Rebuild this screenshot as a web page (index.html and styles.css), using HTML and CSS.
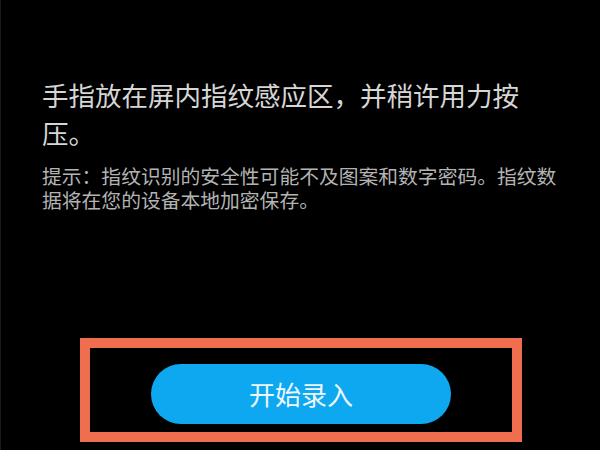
FILE: index.html
```html
<!DOCTYPE html>
<html lang="zh-CN">
<head>
<meta charset="utf-8">
<title>指纹录入</title>
<link rel="stylesheet" href="styles.css">
</head>
<body>
<div class="screen">
  <div class="content">
    <p class="title">手指放在屏内指纹感应区，并稍许用力按压。</p>
    <p class="hint">提示：指纹识别的安全性可能不及图案和数字密码。指纹数据将在您的设备本地加密保存。</p>
  </div>
  <div class="highlight">
    <button class="start-btn" type="button">开始录入</button>
  </div>
</div>
</body>
</html>
```

FILE: styles.css
```css
html, body {
  margin: 0;
  padding: 0;
  background: #000;
}

.screen {
  width: 600px;
  height: 450px;
  box-sizing: border-box;
  border-left: 1px solid #1c1c1c;
  background: #000;
  display: flex;
  flex-direction: column;
  overflow: hidden;
  font-family: "Noto Sans CJK SC", "Noto Sans", sans-serif;
}

.content {
  padding: 76px 0 0 41px;
  width: 525px;
}

.title {
  margin: 0;
  font-size: 26.5px;
  line-height: 37.5px;
  color: #d6d6d6;
}

.hint {
  margin: 13px 0 0 0;
  font-size: 19.8px;
  line-height: 24px;
  color: #b3b3b3;
}

.highlight {
  margin: 126px 0 0 79px;
  width: 442px;
  height: 104px;
  box-sizing: border-box;
  border: 10px solid #ef6e4f;
  padding: 16px 0 0 0;
  display: flex;
  justify-content: center;
  align-items: flex-start;
}

.start-btn {
  width: 300px;
  height: 60px;
  border: none;
  border-radius: 30px;
  background: #0ea8f1;
  color: #eef7fd;
  font-family: "Noto Sans CJK SC", "Noto Sans", sans-serif;
  font-size: 26px;
  padding: 0;
  margin: 0;
  line-height: 60px;
}
```
